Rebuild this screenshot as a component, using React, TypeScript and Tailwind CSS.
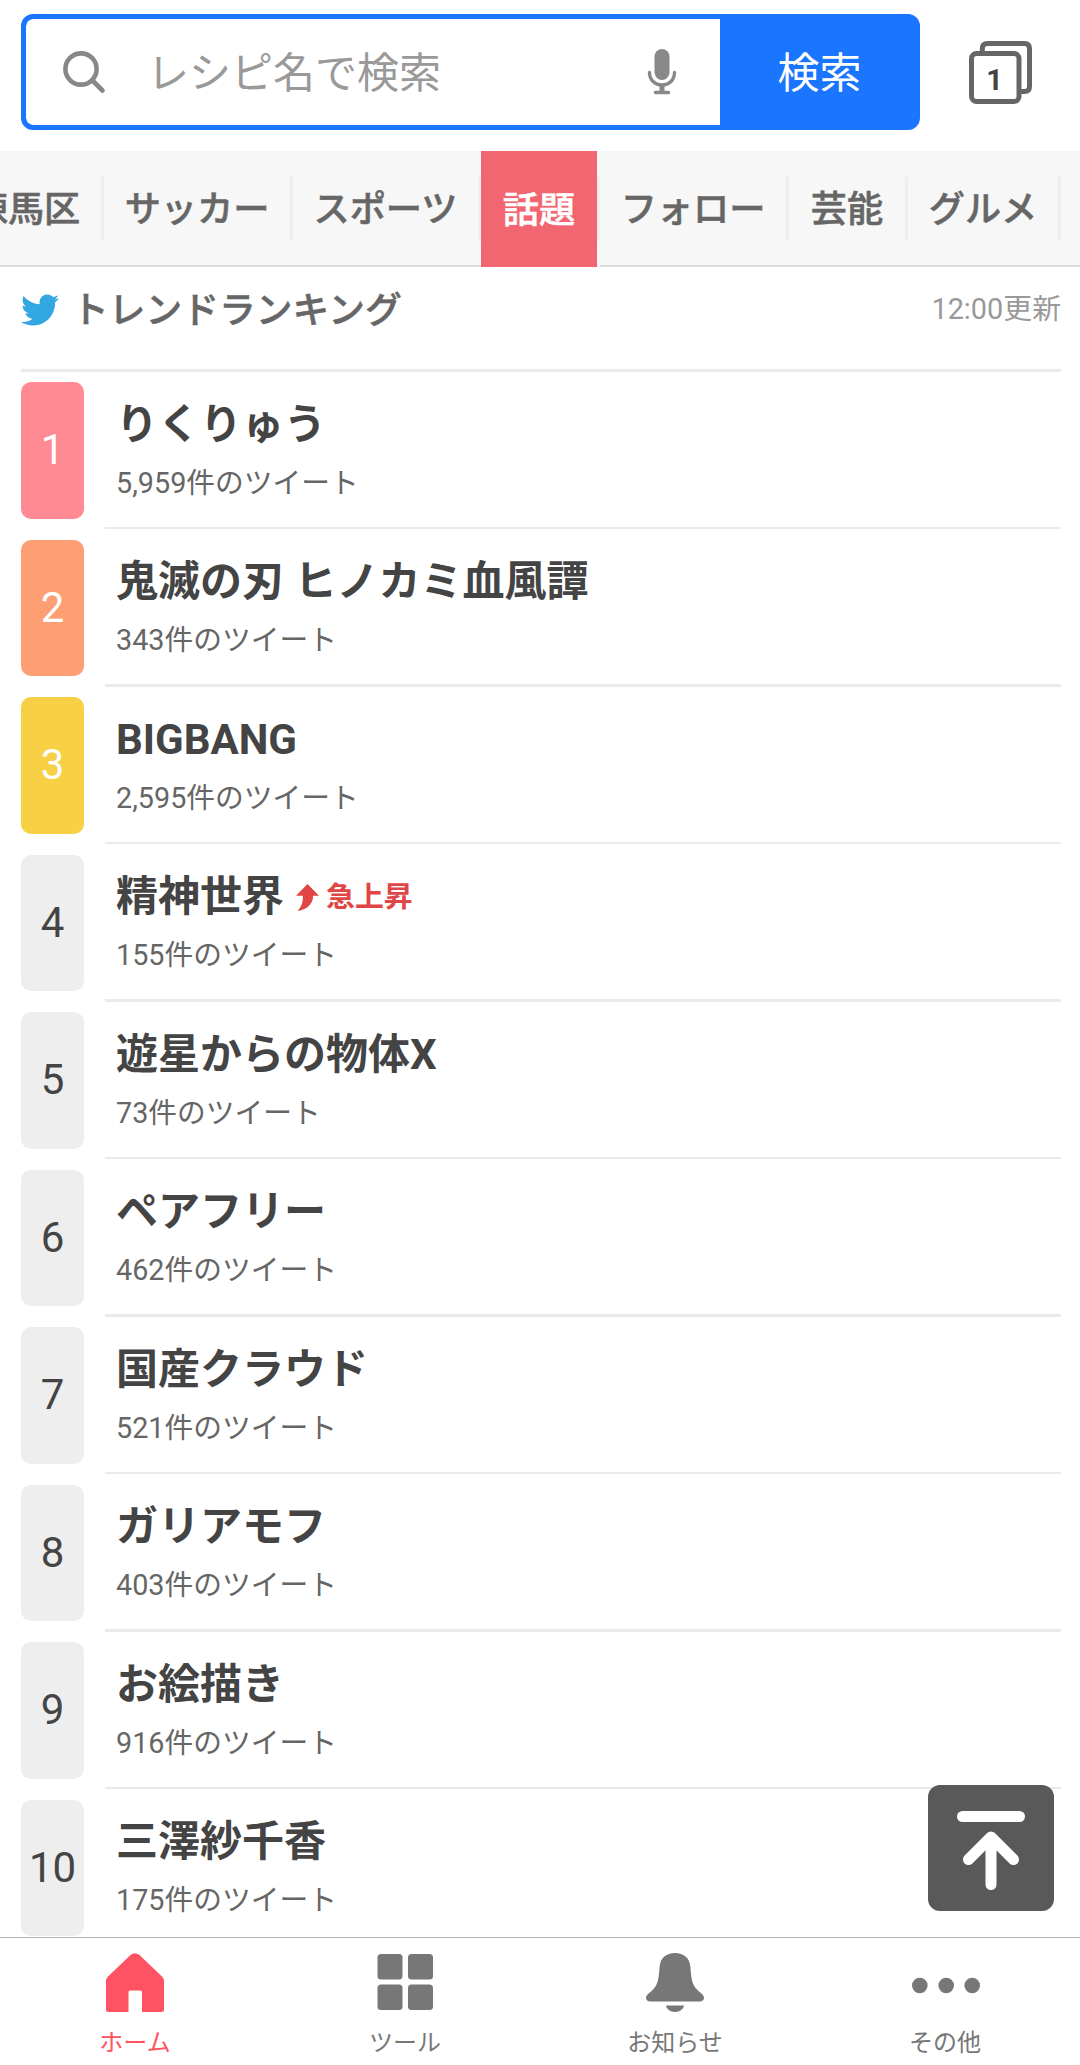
import { FaTwitter } from "react-icons/fa";
import clsx from "clsx";

const categories = [
  { label: "練馬区", width: "w-[153px]" },
  { label: "サッカー", width: "w-[189px]" },
  { label: "スポーツ", width: "w-[188px]" },
  { label: "話題", width: "w-[119px]", active: true },
  { label: "フォロー", width: "w-[189px]" },
  { label: "芸能", width: "w-[119px]" },
  { label: "グルメ", width: "w-[153px]" },
  { label: "", width: "w-[60px]" },
];

const trends = [
  { title: "りくりゅう", count: "5,959", badge: "bg-[#ff8a93] text-white" },
  { title: "鬼滅の刃 ヒノカミ血風譚", count: "343", badge: "bg-[#fd9e73] text-white" },
  { title: "BIGBANG", count: "2,595", badge: "bg-[#f8d046] text-white" },
  { title: "精神世界", count: "155", rising: true },
  { title: "遊星からの物体X", count: "73" },
  { title: "ペアフリー", count: "462" },
  { title: "国産クラウド", count: "521" },
  { title: "ガリアモフ", count: "403" },
  { title: "お絵描き", count: "916" },
  { title: "三澤紗千香", count: "175" },
];

function SearchIcon() {
  return (
    <svg className="w-[44px] h-[44px]" viewBox="0 0 44 44" fill="none" stroke="#888" strokeWidth="4.6" strokeLinecap="round">
      <circle cx="19" cy="19" r="15.6" />
      <path d="M30.5 30.5L40.5 40.5" />
    </svg>
  );
}

function MicIcon() {
  return (
    <svg className="w-[30px] h-[46px]" viewBox="0 0 30 46">
      <rect x="7.5" y="0" width="15" height="31" rx="7.5" fill="#888" />
      <path d="M2.5 23.5C2.5 31 8 36 15 36S27.5 31 27.5 23.5M15 36V43M8.5 43.5H21.5" fill="none" stroke="#888" strokeWidth="3.4" strokeLinecap="round" />
      <path d="M12.5 36H17.5V44H12.5Z" fill="#888" />
    </svg>
  );
}

function TabsIcon() {
  return (
    <svg className="w-[64px] h-[64px]" viewBox="0 0 64 64" fill="none" stroke="#666" strokeWidth="5">
      <path d="M13.3 11V7.5Q13.3 2.5 18.3 2.5H55.5Q60.5 2.5 60.5 7.5V45.5Q60.5 50.5 55.5 50.5H52" />
      <rect x="2.5" y="12.5" width="47.5" height="48" rx="5" />
      <text x="25.5" y="49" textAnchor="middle" fontSize="29" fontWeight="700" fill="#444" stroke="none">1</text>
    </svg>
  );
}

function RisingIcon() {
  return (
    <svg className="w-[23px] h-[27px]" viewBox="0 0 23 27" fill="#e14646">
      <path d="M11.5 0L23 11.8H17C17.3 19 12 25.5 1.5 27C5.8 22.5 7.2 18 6.8 11.8H0Z" />
    </svg>
  );
}

function HomeIcon() {
  return (
    <svg className="w-[58px] h-[59px]" viewBox="0 0 58 59" fill="#ff5263">
      <path d="M24.8 1.8Q29 -1.5 33.2 1.8L56 23.5Q58 25.5 58 28V56.5Q58 59 55.5 59H36V39Q36 37.5 34.5 37.5H24Q22.5 37.5 22.5 39V59H2.5Q0 59 0 56.5V28Q0 25.5 2 23.5Z" />
    </svg>
  );
}

function ToolIcon() {
  return (
    <svg className="w-[56px] h-[56px] mb-[1px]" viewBox="0 0 56 56" fill="#777">
      <rect x="0.5" y="0" width="25" height="25.5" rx="3.5" />
      <rect x="31" y="0" width="25" height="25.5" rx="3.5" />
      <rect x="0.5" y="30.5" width="25" height="25.5" rx="3.5" />
      <rect x="31" y="30.5" width="25" height="25.5" rx="3.5" />
    </svg>
  );
}

function BellIcon() {
  return (
    <svg className="w-[58px] h-[59px]" viewBox="0 0 58 59" fill="#777">
      <path d="M29 0C37.5 0 43.5 5 44.3 13C45.3 23 45 31 51.5 37C54 39.6 58 41.8 58 44.8Q58 48.5 53.5 48.5H4.5Q0 48.5 0 44.8C0 41.8 4 39.6 6.5 37C13 31 12.7 23 13.7 13C14.5 5 20.5 0 29 0Z" />
      <path d="M20 52.5H38C37.5 56 34 59 29 59S20.5 56 20 52.5Z" />
    </svg>
  );
}

function MoreIcon() {
  return (
    <svg className="w-[70px] h-[59px]" viewBox="0 0 70 59" fill="#777">
      <circle cx="9.8" cy="32.5" r="7.8" />
      <circle cx="36.2" cy="32.5" r="7.8" />
      <circle cx="62.2" cy="32.5" r="7.8" />
    </svg>
  );
}

const navItems = [
  { label: "ホーム", icon: <HomeIcon />, active: true },
  { label: "ツール", icon: <ToolIcon /> },
  { label: "お知らせ", icon: <BellIcon /> },
  { label: "その他", icon: <MoreIcon /> },
];

export default function App() {
  return (
    <div lang="ja" className="relative flex flex-col w-[1080px] h-[2065px] overflow-hidden bg-white font-['Roboto','Noto_Sans_CJK_JP',sans-serif] text-[#444]">
      {/* Search header */}
      <header className="flex h-[151px] shrink-0 pt-[14px] pl-[21px]">
        <div className="flex w-[899px] h-[116px] rounded-[12px] overflow-hidden border-[5px] border-[#1a75ff] bg-[#1a75ff]">
          <div className="flex items-center w-[694px] h-full rounded-l-[7px] bg-white pl-[36px] pr-[43px]">
            <SearchIcon />
            <span className="ml-[41px] pt-[4px] text-[42px] leading-none text-[#999]">レシピ名で検索</span>
            <span className="ml-auto">
              <MicIcon />
            </span>
          </div>
          <button className="flex-1 pt-[4px] pl-[4px] text-[42px] leading-none text-white">検索</button>
        </div>
        <div className="ml-[49px] mt-[27px]">
          <TabsIcon />
        </div>
      </header>

      {/* Category tabs */}
      <nav className="flex h-[116px] shrink-0 bg-[#f7f7f7]">
        <div className="flex -ml-[49px] shrink-0">
          {categories.map((item) => (
            <div key={item.label} className={clsx("flex shrink-0 h-full", item.width, !item.active && "border-b-2 border-[#dcdcdc]")}>
              <div
                className={clsx(
                  "flex flex-1 items-center justify-center pt-[5px] whitespace-nowrap text-[36.2px] leading-none font-medium [-webkit-text-stroke:0.5px]",
                  item.active ? "bg-[#f26671] text-white" : "text-[#666]"
                )}
              >
                {item.label}
              </div>
              <div className="w-[3px] h-[64px] mt-[26px] bg-[#eee]" />
            </div>
          ))}
        </div>
      </nav>

      {/* Trend ranking */}
      <main className="flex flex-col h-[1670px] shrink-0 overflow-hidden pl-[21px] pr-[19px]">
        <div className="flex items-center h-[102px] shrink-0 pb-[17px]">
          <FaTwitter className="w-[38px] h-[38px] mt-[1px] text-[#33a7e2]" />
          <h1 className="ml-[13px] pt-[3px] text-[36.75px] leading-none font-medium text-[#666] [-webkit-text-stroke:0.5px]">トレンドランキング</h1>
          <span className="ml-auto text-[28.875px] leading-none text-[#999]">12:00更新</span>
        </div>
        <div className="h-[2.6px] shrink-0 bg-[#eaeaea]" />
        <ol className="flex flex-col">
          {trends.map((trend, i) => (
            <li key={trend.title} className="flex h-[157.5px] shrink-0">
              <div className={clsx("flex items-center justify-center w-[63px] h-[136.5px] mt-[10.5px] rounded-[10px] text-[42px] leading-none", trend.badge ?? "bg-[#eee] text-[#444]")}>
                {i + 1}
              </div>
              <div className="flex flex-col flex-1 ml-[21px]">
                <div className="flex flex-col flex-1 pl-[11px] pt-[32px]">
                  <div className="flex items-center h-[42px]">
                    <h2 className="text-[42px] leading-none font-bold whitespace-pre">{trend.title}</h2>
                    {trend.rising && (
                      <span className="flex items-center ml-[12px] text-[28.875px] leading-none font-bold text-[#e14646]">
                        <RisingIcon />
                        <span className="ml-[7px]">急上昇</span>
                      </span>
                    )}
                  </div>
                  <p className="mt-[23px] text-[28.75px] leading-none text-[#666]">{trend.count}件のツイート</p>
                </div>
                <div className="h-[2.6px] bg-[#eaeaea]" />
              </div>
            </li>
          ))}
        </ol>
      </main>

      {/* Bottom navigation */}
      <footer className="grid grid-cols-4 h-[128px] shrink-0 border-t border-[#b4b4b4] bg-white">
        {navItems.map((item) => (
          <div key={item.label} className={clsx("flex flex-col items-center pt-[15px] text-[24px] leading-none", item.active ? "text-[#ff5263]" : "text-[#777]")}>
            <div className="flex items-center h-[59px]">{item.icon}</div>
            <span className="mt-[19px]">{item.label}</span>
          </div>
        ))}
      </footer>

      {/* Scroll to top */}
      <button className="absolute left-[928px] top-[1785px] w-[126px] h-[126px] rounded-[12px] bg-[#595959]">
        <svg className="w-[126px] h-[126px]" viewBox="0 0 126 126" fill="none" stroke="#fff" strokeWidth="11" strokeLinecap="round" strokeLinejoin="round">
          <path d="M34.5 31.5H91.5" />
          <path d="M40.5 74.5L63 52L85.5 74.5M63 54V99.5" />
        </svg>
      </button>
    </div>
  );
}
